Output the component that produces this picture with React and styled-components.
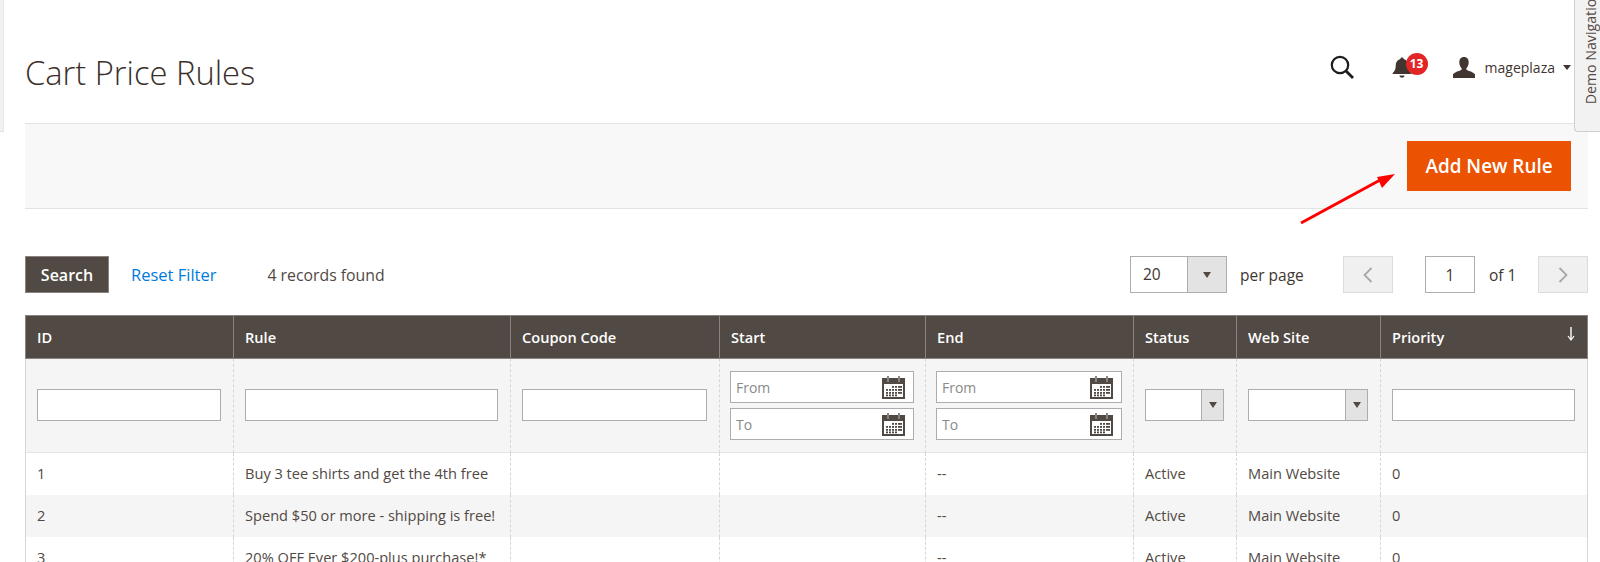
import React from "react";
import styled, { createGlobalStyle } from "styled-components";

const columns = [208, 277, 209, 206, 208, 103, 144, 208];

const rules = [
  { id: 1, name: "Buy 3 tee shirts and get the 4th free" },
  { id: 2, name: "Spend $50 or more - shipping is free!" },
  { id: 3, name: "20% OFF Ever $200-plus purchase!*" },
];

const SearchIcon = () => (
  <svg width="24" height="24" viewBox="0 0 24 24" fill="none" stroke="#1f1c1a">
    <circle cx="10" cy="10" r="8.2" strokeWidth="2.2" />
    <path d="M16 16l7 7" strokeWidth="2.8" />
  </svg>
);

const BellIcon = () => (
  <svg width="20" height="22" viewBox="0 0 20 22" fill="#41362f">
    <path d="M10 1.5c1 0 1.6.7 1.7 1.6 3.2.8 4.6 3.6 4.6 7 0 3.4 1 5 3 6.9v1H.7v-1c2-1.900 3-3.500 3-6.900 0-3.400 1.400-6.200 4.600-7C8.400 2.200 9 1.500 10 1.500z" />
    <path d="M7.500 19.500h5c0 1.300-1.100 2.200-2.500 2.200s-2.500-.9-2.500-2.200z" />
  </svg>
);

const UserIcon = () => (
  <svg width="22" height="21" viewBox="0 0 22 21" fill="#41362f">
    <path d="M11 0c3 0 4.700 2.200 4.700 5.200 0 2.300-.9 4.500-2.100 5.800-.5.600-.4 1.600.3 2 2.200 1.200 7.100 2.300 8.100 4.500V21H0v-3.500c1-2.200 5.900-3.300 8.100-4.500.7-.4.800-1.400.3-2C7.200 9.700 6.300 7.500 6.300 5.200 6.300 2.200 8 0 11 0z" />
  </svg>
);

const CalendarIcon = () => (
  <svg width="23" height="23" viewBox="0 0 23 23">
    <rect x="0" y="2" width="23" height="21" fill="#514943" />
    <rect x="2" y="8" width="19" height="13" fill="#fff" />
    <rect x="5" y="0" width="2" height="6" fill="#8a837f" />
    <rect x="16" y="0" width="2" height="6" fill="#8a837f" />
    <g fill="#514943">
      {[10, 13, 16, 18.500].map((y, row) =>
        [4, 7, 10, 13, 16, 18].map((x, col) =>
          (row === 0 && col < 2) || (row === 3 && col > 3) ? null : (
            <rect key={`${x}-${y}`} x={x} y={y} width="2" height="1.800" />
          )
        )
      )}
    </g>
  </svg>
);

const Chevron = ({ flip }) => (
  <svg width="10" height="16" viewBox="0 0 10 16" fill="none" stroke="#a8a8a8" strokeWidth="1.800">
    <path d={flip ? "M1.500 1l7 7-7 7" : "M8.500 1l-7 7 7 7"} />
  </svg>
);

const SortArrow = () => (
  <svg width="8" height="14" viewBox="0 0 8 14" fill="none" stroke="#fff">
    <path d="M4 0v12" strokeWidth="1.400" />
    <path d="M1 9l3 4 3-4" strokeWidth="1.200" />
  </svg>
);

const DateField = ({ placeholder }) => (
  <DateBox>
    <DateInput placeholder={placeholder} />
    <CalendarIcon />
  </DateBox>
);

const App = () => {
  return (
    <Page>
      <GlobalStyle />
      <MenuEdge />
      <DemoTab>
        <DemoLabel>Demo Navigation</DemoLabel>
      </DemoTab>

      <Header>
        <Title>Cart Price Rules</Title>
        <HeaderTools>
          <SearchIcon />
          <BellWrap>
            <BellIcon />
            <Badge>13</Badge>
          </BellWrap>
          <UserWrap>
            <UserIcon />
            <UserName>mageplaza</UserName>
            <UserCaret />
          </UserWrap>
        </HeaderTools>
      </Header>

      <ActionBar>
        <AddButton>Add New Rule</AddButton>
      </ActionBar>

      <PointerArrow width="100" height="54" viewBox="0 0 100 54">
        <path d="M3 51L84 7" stroke="#f00" strokeWidth="3" />
        <path d="M97 2L79 5l5 11z" fill="#f00" />
      </PointerArrow>

      <Toolbar>
        <SearchButton>Search</SearchButton>
        <ResetLink>Reset Filter</ResetLink>
        <Records>4 records found</Records>
        <Pager>
          <PerPage>
            <PerPageValue>20</PerPageValue>
            <SelectAddon $width={39}>
              <SelectCaret />
            </SelectAddon>
          </PerPage>
          <PerPageLabel>per page</PerPageLabel>
          <PageButton>
            <Chevron />
          </PageButton>
          <PageInput defaultValue="1" />
          <PageCount>of 1</PageCount>
          <PageButton>
            <Chevron flip />
          </PageButton>
        </Pager>
      </Toolbar>

      <Table>
        <colgroup>
          {columns.map((width, index) => (
            <col key={index} width={width} />
          ))}
        </colgroup>
        <thead>
          <tr>
            <Th>ID</Th>
            <Th>Rule</Th>
            <Th>Coupon Code</Th>
            <Th>Start</Th>
            <Th>End</Th>
            <Th>Status</Th>
            <Th>Web Site</Th>
            <Th>
              <SortHead>
                Priority
                <SortArrow />
              </SortHead>
            </Th>
          </tr>
          <tr>
            <FilterCell><TextFilter /></FilterCell>
            <FilterCell><TextFilter /></FilterCell>
            <FilterCell><TextFilter /></FilterCell>
            <FilterCell>
              <DateStack>
                <DateField placeholder="From" />
                <DateField placeholder="To" />
              </DateStack>
            </FilterCell>
            <FilterCell>
              <DateStack>
                <DateField placeholder="From" />
                <DateField placeholder="To" />
              </DateStack>
            </FilterCell>
            <FilterCell>
              <FilterSelect>
                <SelectAddon $width={22}><SelectCaret /></SelectAddon>
              </FilterSelect>
            </FilterCell>
            <FilterCell>
              <FilterSelect>
                <SelectAddon $width={22}><SelectCaret /></SelectAddon>
              </FilterSelect>
            </FilterCell>
            <FilterCell><TextFilter /></FilterCell>
          </tr>
        </thead>
        <tbody>
          {rules.map((rule) => (
            <Row key={rule.id} $even={rule.id % 2 === 0}>
              <Td>{rule.id}</Td>
              <Td>{rule.name}</Td>
              <Td />
              <Td />
              <Td>--</Td>
              <Td>Active</Td>
              <Td>Main Website</Td>
              <Td>0</Td>
            </Row>
          ))}
        </tbody>
      </Table>
    </Page>
  );
};

export default App;

const GlobalStyle = createGlobalStyle`
  html, body {
    margin: 0;
    height: 562px;
    overflow: hidden;
    background: #fff;
  }
  * {
    box-sizing: border-box;
  }
`;

const Page = styled.div`
  position: relative;
  width: 1600px;
  height: 562px;
  overflow: hidden;
  padding: 0 12px 0 25px;
  font-family: "Open Sans", "Liberation Sans", sans-serif;
  font-size: 14px;
  color: #41362f;
`;

const MenuEdge = styled.div`
  position: absolute;
  left: 0;
  top: 0;
  width: 4px;
  height: 132px;
  background: #f1f1f1;
  border-right: 1px solid #e6e6e6;
  border-bottom: 1px solid #e0e0e0;
`;

const DemoTab = styled.div`
  position: absolute;
  right: 0;
  top: 0;
  width: 26px;
  height: 132px;
  overflow: hidden;
  background: #f2f2f2;
  border: 1px solid #cfcfcf;
  border-top: none;
  border-right: none;
  border-bottom-left-radius: 4px;
  z-index: 2;
`;

const DemoLabel = styled.span`
  position: absolute;
  left: 8px;
  bottom: 27px;
  font-size: 14.200px;
  line-height: 16px;
  white-space: nowrap;
  color: #514943;
  writing-mode: vertical-rl;
  transform: rotate(180deg);
`;

const Header = styled.header`
  display: flex;
  justify-content: space-between;
  align-items: flex-start;
  height: 123px;
`;

const Title = styled.h1`
  margin: 51px 0 0;
  font-size: 32.700px;
  line-height: 43px;
  font-weight: 300;
  color: #3a2f29;
`;

const HeaderTools = styled.div`
  display: flex;
  align-items: center;
  height: 24px;
  margin-top: 55px;
  padding-right: 17px;
`;

const BellWrap = styled.div`
  position: relative;
  display: flex;
  margin-left: 38px;
  margin-right: 41px;
`;

const Badge = styled.span`
  position: absolute;
  left: 14px;
  top: -3px;
  width: 22px;
  height: 22px;
  border-radius: 50%;
  background: #e22626;
  color: #fff;
  font-size: 12px;
  font-weight: 700;
  line-height: 22px;
  text-align: center;
`;

const UserWrap = styled.div`
  display: flex;
  align-items: center;
`;

const UserName = styled.span`
  margin-left: 10px;
  font-size: 14px;
  color: #41362f;
`;

const UserCaret = styled.span`
  margin-left: 8px;
  border-left: 4px solid transparent;
  border-right: 4px solid transparent;
  border-top: 5px solid #41362f;
`;

const ActionBar = styled.div`
  display: flex;
  justify-content: flex-end;
  align-items: center;
  height: 86px;
  padding-right: 17px;
  background: #f8f8f8;
  border-top: 1px solid #e3e3e3;
  border-bottom: 1px solid #e3e3e3;
`;

const AddButton = styled.button`
  width: 164px;
  height: 50px;
  padding: 0;
  background: #eb5202;
  border: 1px solid #eb5202;
  color: #fff;
  font-family: inherit;
  font-size: 18.900px;
  font-weight: 600;
`;

const PointerArrow = styled.svg`
  position: absolute;
  left: 1298px;
  top: 172px;
`;

const Toolbar = styled.div`
  display: flex;
  align-items: center;
  height: 37px;
  margin-top: 47px;
`;

const SearchButton = styled.button`
  width: 84px;
  height: 37px;
  padding: 0;
  background: #514943;
  border: 1px solid #8a837f;
  color: #fff;
  font-family: inherit;
  font-size: 16px;
  font-weight: 600;
`;

const ResetLink = styled.a`
  margin-left: 22px;
  color: #007bdb;
  font-size: 16.500px;
`;

const Records = styled.span`
  margin-left: 51px;
  color: #514943;
  font-size: 15.800px;
`;

const Pager = styled.div`
  display: flex;
  align-items: center;
  margin-left: auto;
  font-size: 15.500px;
`;

const PerPage = styled.div`
  display: flex;
  justify-content: space-between;
  width: 97px;
  height: 37px;
  background: #fff;
  border: 1px solid #adadad;
`;

const PerPageValue = styled.span`
  padding-left: 12px;
  line-height: 35px;
`;

const SelectAddon = styled.span`
  display: flex;
  align-items: center;
  justify-content: center;
  width: ${(props) => props.$width}px;
  height: 100%;
  background: #e3e3e3;
  border-left: 1px solid #adadad;
`;

const SelectCaret = styled.span`
  border-left: 4.500px solid transparent;
  border-right: 4.500px solid transparent;
  border-top: 6px solid #514943;
`;

const PerPageLabel = styled.span`
  width: 103px;
  margin-left: 13px;
`;

const PageButton = styled.div`
  display: flex;
  align-items: center;
  justify-content: center;
  width: 50px;
  height: 37px;
  background: #f0f0f0;
  border: 1px solid #dcdcdc;
`;

const PageInput = styled.input`
  width: 50px;
  height: 37px;
  margin-left: 32px;
  background: #fff;
  border: 1px solid #adadad;
  color: #41362f;
  font-family: inherit;
  font-size: 15.500px;
  text-align: center;
`;

const PageCount = styled.span`
  width: 63px;
  padding-left: 14px;
  color: #41362f;
`;

const Table = styled.table`
  width: 1563px;
  margin-top: 22px;
  table-layout: fixed;
  border-collapse: separate;
  border-spacing: 0;
`;

const Th = styled.th`
  height: 44px;
  padding: 0 12px 0 11px;
  background: #514943;
  border-left: 1px solid #8a837f;
  border-top: 1px solid #8a837f;
  border-bottom: 1px solid #8a837f;
  color: #fff;
  font-size: 14.600px;
  font-weight: 600;
  text-align: left;

  &:last-child {
    border-right: 1px solid #8a837f;
  }
`;

const SortHead = styled.div`
  display: flex;
  justify-content: space-between;
  align-items: flex-start;
`;

const FilterCell = styled.td`
  height: 94px;
  padding: 0 12px 2px 11px;
  background: #f5f5f5;
  border-left: 1px dashed #d6d6d6;
  border-bottom: 1px solid #e3e3e3;

  &:first-child {
    border-left: 1px solid #d6d6d6;
  }
  &:last-child {
    border-right: 1px solid #d6d6d6;
  }
`;

const TextFilter = styled.input`
  display: block;
  width: 100%;
  height: 32px;
  padding: 0 8px;
  background: #fff;
  border: 1px solid #adadad;
`;

const DateStack = styled.div`
  display: flex;
  flex-direction: column;
  gap: 5px;
  margin: 0 -1px -2px -1px;
`;

const DateBox = styled.div`
  display: flex;
  align-items: center;
  height: 32px;
  padding-right: 8px;
  background: #fff;
  border: 1px solid #adadad;
`;

const DateInput = styled.input`
  flex: 1;
  min-width: 0;
  height: 100%;
  padding: 0 5px;
  border: none;
  background: transparent;
  font-family: inherit;
  font-size: 14px;

  &::placeholder {
    color: #8a8a8a;
    opacity: 1;
  }
`;

const FilterSelect = styled.div`
  display: flex;
  justify-content: flex-end;
  height: 32px;
  background: #fff;
  border: 1px solid #adadad;
`;

const Row = styled.tr`
  background: ${(props) => (props.$even ? "#f5f5f5" : "#fff")};
`;

const Td = styled.td`
  height: 42px;
  padding: 0 12px 2px 11px;
  border-left: 1px dashed #d6d6d6;
  color: #514943;
  font-size: 14.600px;

  &:first-child {
    border-left: 1px solid #d6d6d6;
  }
  &:last-child {
    border-right: 1px solid #d6d6d6;
  }
`;
